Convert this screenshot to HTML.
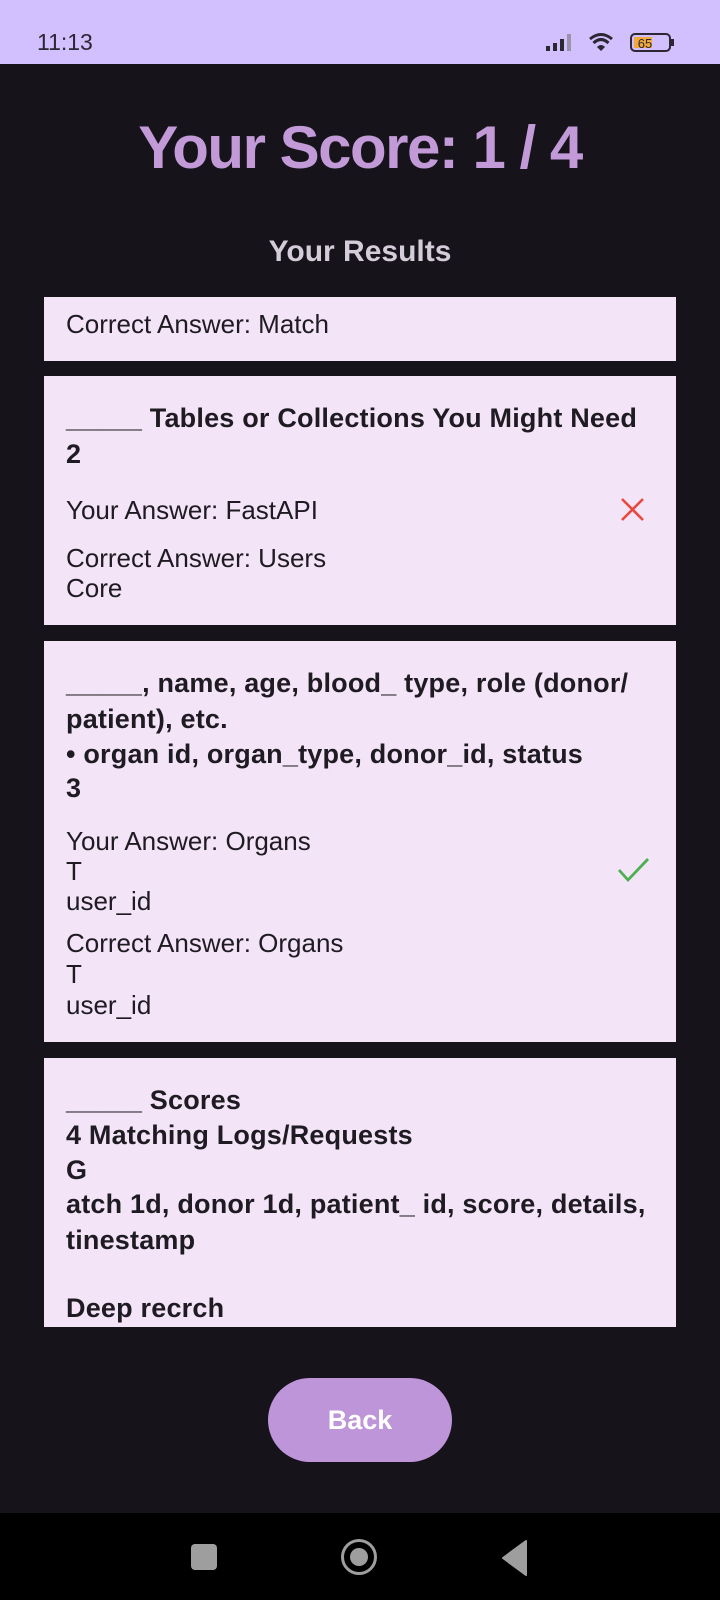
<!DOCTYPE html>
<html><head><meta charset="utf-8"><style>
*{margin:0;padding:0;box-sizing:border-box}
body{width:720px;height:1600px;background:#16131a;font-family:"Liberation Sans",sans-serif;position:relative;overflow:hidden}
.sb{position:absolute;left:0;top:0;width:720px;height:64px;background:#d2c0fe}
.t{position:absolute;white-space:nowrap}
.card{position:absolute;left:44px;width:632px;background:#f3e4f7;overflow:hidden}
.r{font-size:26px;color:#1f1b22;line-height:30px}
.b{font-size:27px;font-weight:bold;color:#1f1b22;line-height:35px;letter-spacing:0.2px}
</style></head><body>
<div class="sb">
<div class="t" style="left:37px;top:29px;font-size:23px;color:#2b2733">11:13</div>
<svg style="position:absolute;left:546px;top:31px" width="130" height="24" viewBox="0 0 130 24">
<rect x="0" y="15" width="4" height="5" fill="#2b2733"/><rect x="7" y="12" width="4" height="8" fill="#2b2733"/><rect x="14" y="8" width="4" height="12" fill="#2b2733"/><rect x="21" y="3" width="4" height="17" fill="#9a92a8"/>
<path d="M44 8 Q55 -1 66 8" stroke="#2b2733" stroke-width="3" fill="none"/><path d="M47.5 12 Q55 5 62.5 12" stroke="#2b2733" stroke-width="3" fill="none"/><path d="M51 16 Q55 12 59 16 L55 20Z" fill="#2b2733"/>
<rect x="85" y="3" width="39" height="17" rx="4" fill="none" stroke="#2b2733" stroke-width="2"/><rect x="88" y="6" width="18" height="11" fill="#f2a93b"/><rect x="125" y="8" width="3" height="7" fill="#2b2733"/>
<text x="99" y="17" font-size="13" text-anchor="middle" fill="#2b2733" font-family="Liberation Sans">65</text>
</svg>
</div>
<div class="t" style="left:0;width:720px;text-align:center;top:113px;font-size:60px;font-weight:bold;color:#c39ad8;letter-spacing:-1.5px">Your Score: 1 / 4</div>
<div class="t" style="left:0;width:720px;text-align:center;top:235px;font-size:30px;font-weight:bold;color:#d4ccd8">Your Results</div>

<div class="card" style="top:297px;height:64px">
<div class="t r" style="left:22px;top:12px">Correct Answer: Match</div>
</div>

<div class="card" style="top:376px;height:249px">
<div class="t b" style="left:22px;top:25px">_____ Tables or Collections You Might Need</div>
<div class="t b" style="left:22px;top:61px">2</div>
<div class="t r" style="left:22px;top:119px">Your Answer: FastAPI</div>
<svg style="position:absolute;left:576px;top:121px" width="25" height="25" viewBox="0 0 25 25"><path d="M2 2L23 23M23 2L2 23" stroke="#e8493f" stroke-width="2.6"/></svg>
<div class="t r" style="left:22px;top:167px">Correct Answer: Users</div>
<div class="t r" style="left:22px;top:197px">Core</div>
</div>

<div class="card" style="top:641px;height:401px">
<div class="t b" style="left:22px;top:25px">_____, name, age, blood_ type, role (donor/</div>
<div class="t b" style="left:22px;top:61px">patient), etc.</div>
<div class="t b" style="left:22px;top:96px">• organ id, organ_type, donor_id, status</div>
<div class="t b" style="left:22px;top:130px">3</div>
<div class="t r" style="left:22px;top:185px">Your Answer: Organs</div>
<div class="t r" style="left:22px;top:215px">T</div>
<div class="t r" style="left:22px;top:245px">user_id</div>
<svg style="position:absolute;left:573px;top:215px" width="33" height="28" viewBox="0 0 33 28"><path d="M2 14L11 24L31 3" stroke="#4caf50" stroke-width="2.8" fill="none"/></svg>
<div class="t r" style="left:22px;top:287px">Correct Answer: Organs</div>
<div class="t r" style="left:22px;top:318px">T</div>
<div class="t r" style="left:22px;top:349px">user_id</div>
</div>

<div class="card" style="top:1058px;height:269px">
<div class="t b" style="left:22px;top:25px">_____ Scores</div>
<div class="t b" style="left:22px;top:60px">4 Matching Logs/Requests</div>
<div class="t b" style="left:22px;top:95px">G</div>
<div class="t b" style="left:22px;top:129px">atch 1d, donor 1d, patient_ id, score, details,</div>
<div class="t b" style="left:22px;top:165px">tinestamp</div>
<div class="t b" style="left:22px;top:233px">Deep recrch</div>
</div>

<div style="position:absolute;left:268px;top:1378px;width:184px;height:84px;border-radius:42px;background:#bf95d9;color:#fff;font-size:27px;font-weight:bold;text-align:center;line-height:84px">Back</div>

<div style="position:absolute;left:0;top:1513px;width:720px;height:87px;background:#000">
<div style="position:absolute;left:191px;top:31px;width:26px;height:26px;border-radius:4px;background:#9e9e9e"></div>
<div style="position:absolute;left:341px;top:26px;width:36px;height:36px;border-radius:50%;border:3px solid #9e9e9e"></div>
<div style="position:absolute;left:350px;top:35px;width:18px;height:18px;border-radius:50%;background:#9e9e9e"></div>
<svg style="position:absolute;left:501px;top:26px" width="26" height="38" viewBox="0 0 26 38"><path d="M25 2L2 19L25 36Z" fill="#9e9e9e" stroke="#9e9e9e" stroke-linejoin="round" stroke-width="2"/></svg>
</div>
</body></html>
